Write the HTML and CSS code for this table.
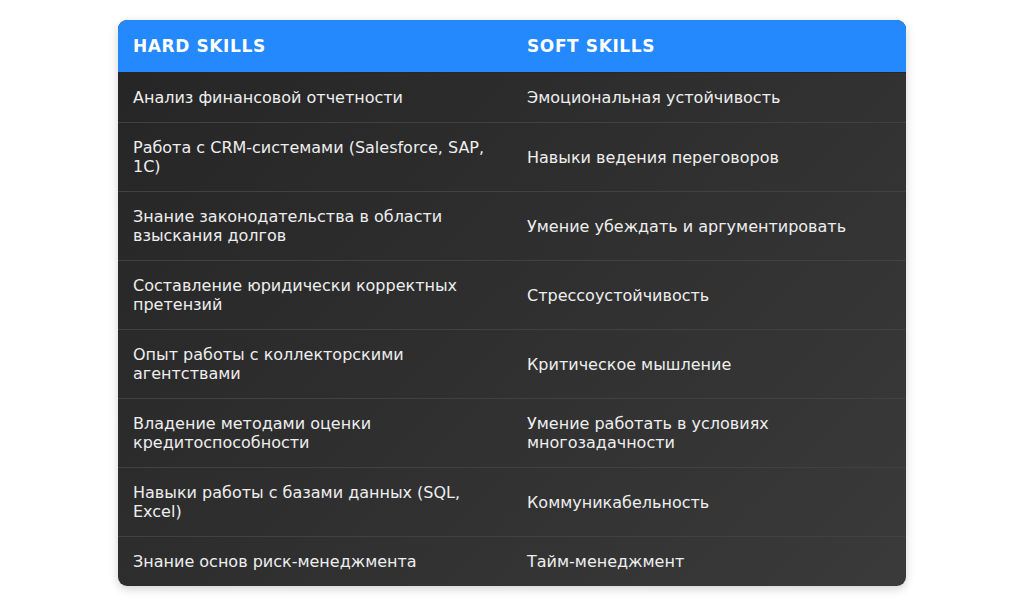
FILE: index.html
```html
<!DOCTYPE html>
<html lang="ru">
<head>
<meta charset="utf-8">
<link rel="stylesheet" href="styles.css">
</head>
<body>
<div class="page">
  <table class="skills">
    <thead>
      <tr><th>Hard Skills</th><th>Soft Skills</th></tr>
    </thead>
    <tbody>
      <tr><td>Анализ финансовой отчетности</td><td>Эмоциональная устойчивость</td></tr>
      <tr><td>Работа с CRM-системами (Salesforce, SAP, 1С)</td><td>Навыки ведения переговоров</td></tr>
      <tr><td>Знание законодательства в области взыскания долгов</td><td>Умение убеждать и аргументировать</td></tr>
      <tr><td>Составление юридически корректных претензий</td><td>Стрессоустойчивость</td></tr>
      <tr><td>Опыт работы с коллекторскими агентствами</td><td>Критическое мышление</td></tr>
      <tr><td>Владение методами оценки кредитоспособности</td><td>Умение работать в условиях многозадачности</td></tr>
      <tr><td>Навыки работы с базами данных (SQL, Excel)</td><td>Коммуникабельность</td></tr>
      <tr><td>Знание основ риск-менеджмента</td><td>Тайм-менеджмент</td></tr>
    </tbody>
  </table>
</div>
</body>
</html>
```
FILE: styles.css
```css
html, body {
  margin: 0;
  padding: 0;
  background: #ffffff;
}
body {
  font-family: "DejaVu Sans", sans-serif;
}
.page {
  padding: 20px 0;
  display: flex;
  justify-content: center;
}
.skills {
  width: 788px;
  border-collapse: separate;
  border-spacing: 0;
  table-layout: fixed;
  border-radius: 9px;
  overflow: hidden;
  background: linear-gradient(135deg, #252525 0%, #2f2f2f 50%, #3a3a3a 100%);
  box-shadow: 0 3px 10px rgba(0, 0, 0, 0.18);
}
.skills th {
  background: #2389fd;
  color: #ffffff;
  text-align: left;
  text-transform: uppercase;
  font-weight: bold;
  font-size: 17px;
  letter-spacing: 0.6px;
  line-height: 22px;
  padding: 15px 15px;
  border-bottom: 1px solid #272727;
}
.skills td {
  color: #eeeeee;
  font-size: 16px;
  line-height: 19px;
  padding: 15px 15px;
  vertical-align: middle;
  border-top: 1px solid #414141;
}
.skills tbody tr:first-child td {
  border-top: none;
}
```
